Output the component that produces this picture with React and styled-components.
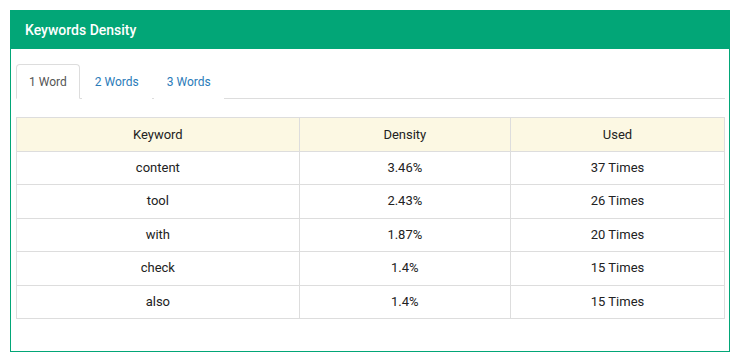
import { useState } from 'react';
import styled, { createGlobalStyle } from 'styled-components';

const GlobalStyle = createGlobalStyle`
  body {
    margin: 0;
    background: #fff;
    font-family: Roboto, "Liberation Sans", Arial, sans-serif;
  }
`;

const Panel = styled.div`
  margin: 10px;
  width: 720px;
  box-sizing: border-box;
  border: 1px solid #02a677;
  background: #fff;
`;

const Header = styled.div`
  background: #02a677;
  color: #fff;
  height: 38px;
  padding: 0 14px;
  display: flex;
  align-items: center;
  font-size: 14px;
  font-weight: 500;
`;

const Body = styled.div`
  padding: 15px 4px 32px 5px;
`;

const Tabs = styled.ul`
  list-style: none;
  margin: 0 0 18px;
  padding: 0;
  display: flex;
  border-bottom: 1px solid #ddd;
`;

const Tab = styled.li`
  margin-bottom: -1px;
  margin-right: 2px;
  padding: 0 12px;
  height: 33px;
  display: flex;
  align-items: center;
  font-size: 12px;
  cursor: pointer;
  border: 1px solid ${p => (p.$active ? '#ddd' : 'transparent')};
  border-bottom-color: ${p => (p.$active ? '#fff' : 'transparent')};
  border-radius: 4px 4px 0 0;
  background: #fff;
  color: ${p => (p.$active ? '#555' : '#2b7bb9')};
`;

const Table = styled.table`
  width: 100%;
  border-collapse: collapse;
  table-layout: fixed;
  font-size: 13px;
  color: #222;
`;

const Th = styled.th`
  background: #fcf8e3;
  font-weight: 400;
  border: 1px solid #ddd;
  padding: 8px;
  line-height: 17px;
  text-align: center;
  width: ${p => p.$w};
`;

const Td = styled.td`
  border: 1px solid #ddd;
  padding: 8px;
  line-height: 16.4px;
  text-align: center;
`;

const rows = [
  ['content', '3.46%', '37 Times'],
  ['tool', '2.43%', '26 Times'],
  ['with', '1.87%', '20 Times'],
  ['check', '1.4%', '15 Times'],
  ['also', '1.4%', '15 Times'],
];

const tabs = ['1 Word', '2 Words', '3 Words'];

export default function App() {
  const [active, setActive] = useState(0);

  return (
    <>
      <GlobalStyle />
      <Panel>
        <Header>Keywords Density</Header>
        <Body>
          <Tabs>
            {tabs.map((t, i) => (
              <Tab key={t} $active={i === active} onClick={() => setActive(i)}>
                {t}
              </Tab>
            ))}
          </Tabs>
          <Table>
            <thead>
              <tr>
                <Th $w="40.4%">Keyword</Th>
                <Th $w="29.6%">Density</Th>
                <Th $w="30%">Used</Th>
              </tr>
            </thead>
            <tbody>
              {rows.map(r => (
                <tr key={r[0]}>
                  {r.map((c, j) => (
                    <Td key={j}>{c}</Td>
                  ))}
                </tr>
              ))}
            </tbody>
          </Table>
        </Body>
      </Panel>
    </>
  );
}
